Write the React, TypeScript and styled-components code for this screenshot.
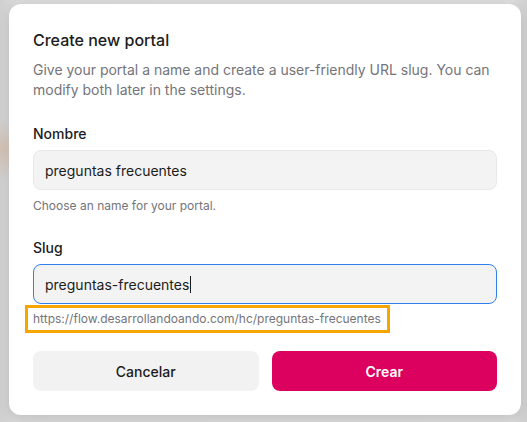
import React from "react";
import styled, { createGlobalStyle } from "styled-components";

const Global = createGlobalStyle`
  html, body { margin: 0; padding: 0; }
  body {
    width: 527px;
    height: 422px;
    overflow: hidden;
    font-family: Inter, "Noto Sans", sans-serif;
    background: #d6d6d6;
  }
`;

const Backdrop = styled.div`
  width: 527px;
  height: 422px;
  box-sizing: border-box;
  padding: 4px 6px 0 9px;
  background:
    radial-gradient(ellipse 14px 30px at 4px 150px, rgba(214, 160, 120, 0.35), transparent),
    linear-gradient(90deg, #d0d0d0 0%, #dadada 3%, #dcdcdc 97%, #cfcfcf 100%);
`;

const Dialog = styled.div`
  width: 512px;
  height: 411px;
  box-sizing: border-box;
  background: #ffffff;
  border-radius: 12px;
  padding: 24px;
  display: flex;
  flex-direction: column;
  box-shadow: 0 4px 14px rgba(0, 0, 0, 0.12);
`;

const Title = styled.h2`
  margin: 0;
  font-size: 16px;
  line-height: 24px;
  font-weight: 500;
  color: #1c1c1c;
`;

const Description = styled.p`
  margin: 8px 0 0;
  font-size: 14px;
  line-height: 20px;
  letter-spacing: -0.01px;
  color: #74747a;
`;

const Field = styled.div<{ $top: number }>`
  margin-top: ${(p) => p.$top}px;
  display: flex;
  flex-direction: column;
`;

const Label = styled.label`
  font-size: 14px;
  line-height: 20px;
  font-weight: 500;
  color: #1c1c1c;
  margin-bottom: 6px;
`;

const Input = styled.div<{ $focused?: boolean }>`
  height: 40px;
  box-sizing: border-box;
  display: flex;
  align-items: center;
  padding: 0 11px;
  background: #f3f3f3;
  border: 1px solid ${(p) => (p.$focused ? "#2f80ed" : "#e8e8e8")};
  border-radius: 8px;
  font-size: 14px;
  color: #1c1c1c;
`;

const Caret = styled.span`
  display: inline-block;
  width: 1px;
  height: 17px;
  background: #1c1c1c;
  margin-left: 1px;
`;

const Help = styled.div`
  margin-top: 8px;
  font-size: 12px;
  line-height: 16px;
  color: #74747a;
`;

const UrlBox = styled.div`
  align-self: flex-start;
  margin: 1px 0 0 -8px;
  border: 3px solid #f5a700;
  padding: 3px 6px 3px 5px;
  font-size: 12px;
  line-height: 16px;
  color: #74747a;
`;

const Actions = styled.div`
  margin-top: 18px;
  display: grid;
  grid-template-columns: 1fr 1fr;
  gap: 13px;
`;

const Button = styled.button<{ $primary?: boolean }>`
  height: 40px;
  border: none;
  border-radius: 8px;
  font-family: Inter, "Noto Sans", sans-serif;
  font-size: 14px;
  font-weight: ${(p) => (p.$primary ? 600 : 500)};
  background: ${(p) => (p.$primary ? "#dc005f" : "#f2f2f2")};
  color: ${(p) => (p.$primary ? "#ffffff" : "#1c1c1c")};
`;

export default function App() {
  return (
    <>
      <Global />
      <Backdrop>
        <Dialog>
          <Title>Create new portal</Title>
          <Description>
            Give your portal a name and create a user-friendly URL slug. You can
            modify both later in the settings.
          </Description>
          <Field $top={24}>
            <Label>Nombre</Label>
            <Input>preguntas frecuentes</Input>
            <Help>Choose an name for your portal.</Help>
          </Field>
          <Field $top={24}>
            <Label>Slug</Label>
            <Input $focused>
              preguntas-frecuentes
              <Caret />
            </Input>
            <UrlBox>https://flow.desarrollandoando.com/hc/preguntas-frecuentes</UrlBox>
          </Field>
          <Actions>
            <Button>Cancelar</Button>
            <Button $primary>Crear</Button>
          </Actions>
        </Dialog>
      </Backdrop>
    </>
  );
}
